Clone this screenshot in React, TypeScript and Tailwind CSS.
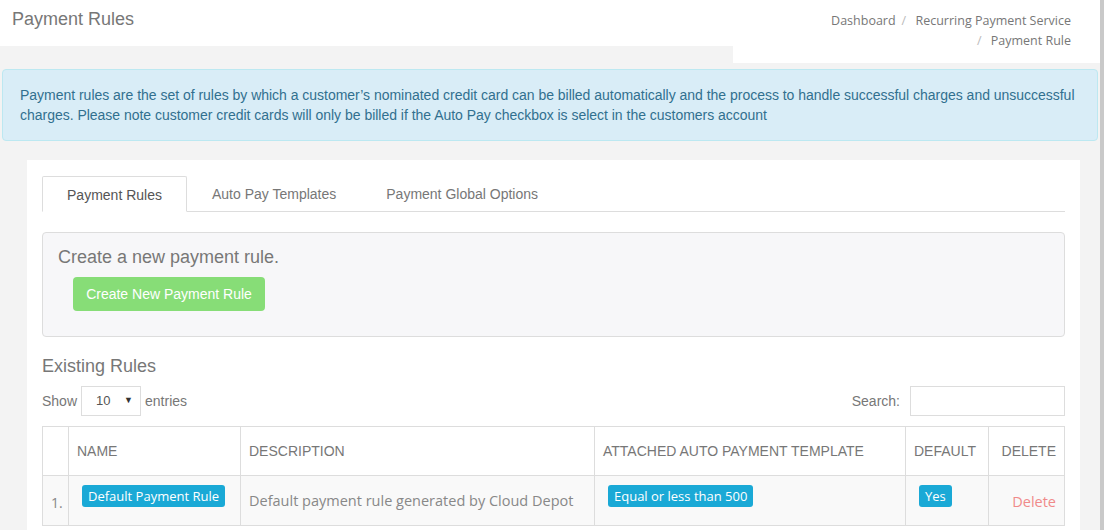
import React from 'react';

const arial = "font-['Liberation_Sans',Arial,sans-serif]";
const mont = "font-['Open_Sans','DejaVu_Sans',sans-serif]";

function Badge({ children }: { children: React.ReactNode }) {
  return (
    <span className={`inline-block rounded-[3px] bg-[#1aa9d6] px-[6px] py-[2px] text-[13px] leading-[18px] text-white ${mont}`}>
      {children}
    </span>
  );
}

export default function App() {
  const tabs = ['Payment Rules', 'Auto Pay Templates', 'Payment Global Options'];

  return (
    <div className={`flex h-[530px] w-[1104px] overflow-hidden bg-[#f3f3f3] ${arial}`}>
      <div className="w-[1100px]">
        {/* header */}
        <div className="flex items-start">
          <div className="h-[46px] flex-1 bg-white pl-[12px] pt-[8px] text-[18px] leading-[22px] text-[#777]">
            Payment Rules
          </div>
          <div className={`h-[63px] w-[367px] bg-white pr-[29px] pt-[11px] text-right text-[12.5px] leading-[20px] text-[#777] ${mont}`}>
            <div>
              Dashboard<span className="mx-[6px] text-[#bbb]">/</span> Recurring Payment Service
            </div>
            <div>
              <span className="mr-[6px] text-[#bbb]">/</span> Payment Rule
            </div>
          </div>
        </div>

        {/* alert */}
        <div className="mx-[2px] mt-[6px] rounded-[4px] border border-[#bce8f1] bg-[#d9edf7] pb-[15px] pl-[17px] pr-[20px] pt-[15px] text-[14px] leading-[20px] tracking-[-0.02px] text-[#31708f]">
          Payment rules are the set of rules by which a customer’s nominated credit card can be billed automatically and the process to handle successful charges and unsuccessful charges. Please note customer credit cards will only be billed if the Auto Pay checkbox is select in the customers account
        </div>

        {/* card */}
        <div className="ml-[27px] mt-[19px] w-[1053px] bg-white px-[15px] pb-[20px] pt-[16px]">
          {/* tabs */}
          <div className="flex border-b border-[#ddd] text-[14px] text-[#555]">
            {tabs.map((t, i) => (
              <div
                key={t}
                className={
                  i === 0
                    ? '-mb-px h-[36px] w-[145px] rounded-t-[2px] border border-[#ddd] border-b-white bg-white pt-[8px] text-center text-[#555]'
                    : 'h-[35px] px-[25px] pt-[8px] text-[#777]'
                }
              >
                {t}
              </div>
            ))}
          </div>

          {/* well */}
          <div className="mt-[20px] h-[105px] rounded-[4px] border border-[#ddd] bg-[#f7f7f9] pl-[15px] pt-[13px]">
            <div className="text-[18px] leading-[22px] text-[#777]">Create a new payment rule.</div>
            <button className="ml-[15px] mt-[9px] h-[34px] w-[192px] rounded-[4px] bg-[#87dd77] text-[14px] text-white">
              Create New Payment Rule
            </button>
          </div>

          <div className="mt-[18px] text-[18px] leading-[22px] text-[#777]">Existing Rules</div>

          {/* controls */}
          <div className="mt-[9px] flex items-center justify-between text-[14px] text-[#777]">
            <div className="flex items-center">
              <span>Show</span>
              <div className="mx-[4px] flex h-[30px] w-[60px] items-center justify-between border border-[#ddd] bg-white pl-[14px] pr-[7px] text-[13px] text-[#555]">
                <span>10</span>
                <span className="text-[9px] text-[#333]">▼</span>
              </div>
              <span>entries</span>
            </div>
            <div className="flex items-center">
              <span className="mr-[10px]">Search:</span>
              <div className="h-[30px] w-[155px] border border-[#ddd] bg-white" />
            </div>
          </div>

          {/* table */}
          <table className="mt-[10px] w-full border-collapse border border-[#ddd] text-[14px]">
            <thead>
              <tr className="h-[49px] text-left uppercase text-[#777]">
                <th className="w-[26px] border border-[#ddd] font-normal" />
                <th className="w-[172px] border border-[#ddd] px-[8px] font-normal">Name</th>
                <th className="w-[354px] border border-[#ddd] px-[8px] font-normal">Description</th>
                <th className="w-[311px] border border-[#ddd] px-[8px] font-normal">Attached Auto Payment Template</th>
                <th className="w-[83px] border border-[#ddd] px-[8px] font-normal">Default</th>
                <th className="border border-[#ddd] px-[8px] text-right font-normal">Delete</th>
              </tr>
            </thead>
            <tbody>
              <tr className={`h-[50px] bg-[#f9f9f9] text-[#888] ${mont}`}>
                <td className="border border-[#ddd] pl-[8px] pt-[4px] text-[14px]">1.</td>
                <td className="border border-[#ddd] px-[13px] pb-[9px] align-middle">
                  <Badge>Default Payment Rule</Badge>
                </td>
                <td className="border border-[#ddd] px-[8px] text-[14.5px]">
                  Default payment rule generated by Cloud Depot
                </td>
                <td className="border border-[#ddd] px-[13px] pb-[9px]">
                  <Badge>Equal or less than 500</Badge>
                </td>
                <td className="border border-[#ddd] px-[13px] pb-[9px]">
                  <Badge>Yes</Badge>
                </td>
                <td className="border border-[#ddd] px-[8px] pt-[2px] text-right text-[14.5px] text-[#f08a8a]">
                  Delete
                </td>
              </tr>
            </tbody>
          </table>
        </div>
      </div>
      <div className="w-[4px] bg-[#c9c9c9]" />
    </div>
  );
}
